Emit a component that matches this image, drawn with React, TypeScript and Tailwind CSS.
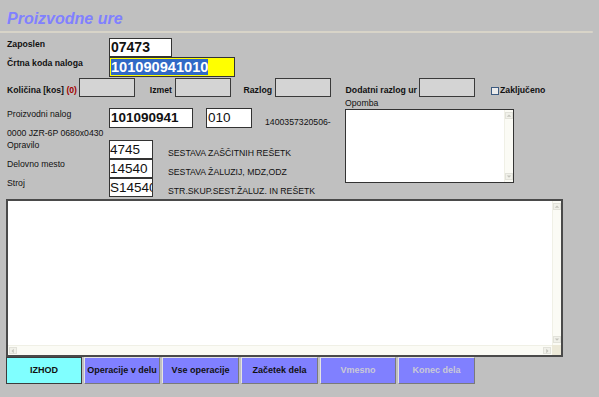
import React from 'react';

function Arrow({ dir }: { dir: 'up' | 'down' | 'left' | 'right' }) {
  const pts =
    dir === 'up' ? '1,5 4,2 7,5' : dir === 'down' ? '1,2 4,5 7,2' : dir === 'left' ? '5,1 2,4 5,7' : '3,1 6,4 3,7';
  return (
    <div className="flex items-center justify-center w-[8px] h-[7px] bg-[#f1f1ea] border border-[#e2e2da]">
      <svg width="8" height="8" viewBox="0 0 8 8">
        <polygon points={pts} fill="#c4c4bc" />
      </svg>
    </div>
  );
}

function VScroll() {
  return (
    <div className="w-[9px] flex flex-col items-center justify-between py-[2px] bg-[#fbfbf5] border-l border-[#f0f0e6]">
      <Arrow dir="up" />
      <Arrow dir="down" />
    </div>
  );
}

function Label({ children, className = '' }: { children: React.ReactNode; className?: string }) {
  return <div className={`shrink-0 text-[8.7px] leading-[11px] whitespace-nowrap ${className}`}>{children}</div>;
}

function GrayBox({ w }: { w: string }) {
  return <div className={`${w} shrink-0 h-[19px] bg-[#d4d4d4] border border-[#3a3a3a]`} />;
}

function Btn({ label, w, cyan = false, disabled = false }: { label: string; w: string; cyan?: boolean; disabled?: boolean }) {
  return (
    <div
      className={`${w} h-[27px] flex items-center justify-center text-[9px] font-bold border ${
        cyan
          ? 'bg-[#80ffff] border-[#3c3c3c]'
          : 'bg-[#8080ff] border-t-[#e4e4e4] border-l-[#e4e4e4] border-r-[#7a7a7a] border-b-[#7a7a7a]'
      } ${disabled ? 'text-[#c9c9d6]' : 'text-[#111]'}`}
    >
      {label}
    </div>
  );
}

export default function App() {
  return (
    <div className="w-[599px] h-[397px] bg-[#c0c0c0] overflow-hidden font-['Liberation_Sans',Arial,sans-serif] text-[#111]">
      <div className="pl-[7px] pt-[9px] h-[28px] text-[16px] leading-[19px] font-bold italic text-[#8080ff]">
        Proizvodne ure
      </div>
      <div className="mt-[3px] w-[593px] h-[2px] bg-[#d8d4c8] rounded-r-full" />

      {/* Zaposlen */}
      <div className="mt-[5px] flex h-[19px]">
        <Label className="w-[109px] pl-[7px] pt-[1px] font-bold">Zaposlen</Label>
        <div className="w-[63px] h-[19px] bg-white border border-[#333] pl-[1px] text-[14px] leading-[17px] font-bold">
          07473
        </div>
      </div>

      {/* Črtna koda */}
      <div className="flex h-[20px]">
        <Label className="w-[109px] pl-[7px] pt-[1px] font-bold">Črtna koda naloga</Label>
        <div className="w-[126px] h-[20px] bg-[#ffff00] border border-[#333] pl-[1px] text-[14.6px] leading-[18px] font-bold">
          <span className="bg-[#3169c6] text-white">101090941010</span>
        </div>
      </div>

      {/* Količina row */}
      <div className="mt-[1px] flex items-end h-[19px]">
        <Label className="w-[79px] pl-[7px] pb-[1px] font-bold">
          Količina [kos] <span className="text-[#a00000]">(0)</span>
        </Label>
        <GrayBox w="w-[56px]" />
        <Label className="w-[40px] pr-[3px] pb-[1px] font-bold text-right">Izmet</Label>
        <GrayBox w="w-[56px]" />
        <Label className="w-[44px] pr-[3px] pb-[1px] font-bold text-right">Razlog</Label>
        <GrayBox w="w-[56px]" />
        <Label className="w-[88px] pr-[2px] pb-[1px] font-bold text-right">Dodatni razlog ur</Label>
        <GrayBox w="w-[56px]" />
        <div className="ml-[16px] mb-[1px] flex items-center">
          <div className="w-[8px] h-[8px] border border-[#3c5a80] bg-[#ebebeb]" />
          <Label className="pl-[1px] font-bold">Zaključeno</Label>
        </div>
      </div>

      {/* Nalog section + Opomba */}
      <div className="flex">
        <div className="w-[345px] pt-[11px]">
          <div className="flex h-[20px]">
            <Label className="w-[109px] pl-[7px] pt-[1px]">Proizvodni nalog</Label>
            <div className="w-[84px] h-[20px] bg-white border border-[#333] pl-[1px] text-[13.5px] leading-[18px] font-bold">
              101090941
            </div>
            <div className="ml-[13px] w-[46px] h-[20px] bg-white border border-[#333] pl-[1px] text-[13.5px] leading-[18px]">
              010
            </div>
            <Label className="ml-[13px] pt-[9px]">1400357320506-</Label>
          </div>
          <Label className="pl-[7px] h-[12px]">0000 JZR-6P 0680x0430</Label>
          {[
            ['Opravilo', '4745', 'SESTAVA ZAŠČITNIH REŠETK'],
            ['Delovno mesto', '14540', 'SESTAVA ŽALUZIJ, MDZ,ODZ'],
            ['Stroj', 'S14540', 'STR.SKUP.SEST.ŽALUZ. IN REŠETK'],
          ].map(([l, v, d]) => (
            <div key={l} className="flex h-[19px]">
              <Label className="w-[109px] pl-[7px]">{l}</Label>
              <div className="w-[44px] h-[19px] bg-white border border-[#333] text-[13.5px] leading-[17px] overflow-hidden whitespace-nowrap">
                {v}
              </div>
              <Label className="ml-[15px] pt-[8px]">{d}</Label>
            </div>
          ))}
        </div>
        <div className="w-[169px]">
          <Label className="pt-[1px] h-[12px]">Opomba</Label>
          <div className="w-[169px] h-[74px] bg-white border border-[#333] flex justify-end">
            <VScroll />
          </div>
        </div>
      </div>

      {/* Big textarea */}
      <div className="mt-[2px] ml-[6px] w-[557px] h-[158px] bg-white border-2 border-[#4a4a4a] flex flex-col">
        <div className="flex flex-1">
          <div className="flex-1" />
          <VScroll />
        </div>
        <div className="flex h-[10px]">
          <div className="flex-1 flex items-center justify-between px-[1px] bg-[#fbfbf5] border-t border-[#f0f0e6]">
            <Arrow dir="left" />
            <Arrow dir="right" />
          </div>
          <div className="w-[9px] bg-[#ece9d8]" />
        </div>
      </div>

      {/* Buttons */}
      <div className="ml-[6px] flex gap-[2px]">
        <Btn label="IZHOD" w="w-[76px]" cyan />
        <Btn label="Operacije v delu" w="w-[76px]" />
        <Btn label="Vse operacije" w="w-[77px]" />
        <Btn label="Začetek dela" w="w-[77px]" />
        <Btn label="Vmesno" w="w-[76px]" disabled />
        <Btn label="Konec dela" w="w-[77px]" disabled />
      </div>
    </div>
  );
}
